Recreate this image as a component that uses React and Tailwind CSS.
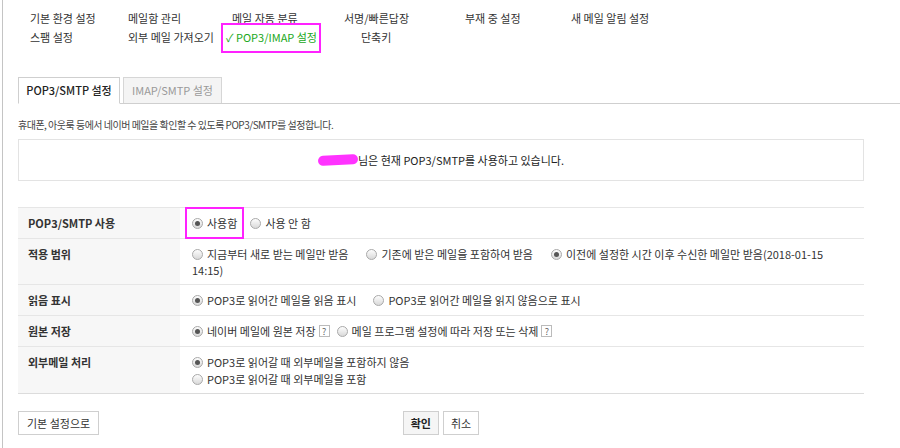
import React from "react";

const font = { fontFamily: '"Noto Sans CJK KR", "Noto Sans", sans-serif' };

const Radio = ({ checked }) => (
  <span className="flex items-center justify-center w-[11px] h-[11px] rounded-full border border-[#a9a9a9] bg-gradient-to-b from-[#fdfdfd] to-[#d9d9d9] mr-[4px] shrink-0">
    {checked && <span className="w-[5px] h-[5px] rounded-full bg-[#555]" />}
  </span>
);

const Help = () => (
  <span className="flex items-center justify-center w-[11px] h-[12px] border border-[#bbb] text-[9px] leading-none text-[#666] ml-[3px]">
    ?
  </span>
);

const Opt = ({ checked, children, className = "" }) => (
  <span className={`flex items-center h-[16px] whitespace-nowrap ${className}`}>
    <Radio checked={checked} />
    {children}
  </span>
);

const Row = ({ label, children, h, last }) => (
  <div className={`grid grid-cols-[162px_1fr] border-t border-[#e6e6e6] ${h} ${last ? "border-b border-b-[#dcdcdc]" : ""}`}>
    <div className="bg-[#f7f7f7] pl-[10px] pt-[7px] font-bold text-[#333] leading-[16px]">{label}</div>
    <div className="relative pl-[12px] pt-[7px] leading-[16px] flex flex-col">{children}</div>
  </div>
);

export default function App() {
  const menu1 = [
    ["기본 환경 설정", "w-[98px]"],
    ["메일함 관리", "w-[104px]"],
    ["메일 자동 분류", "w-[112px]"],
    ["서명/빠른답장", "w-[121px]"],
    ["부재 중 설정", "w-[106px]"],
    ["새 메일 알림 설정", "w-[120px]"],
  ];

  return (
    <div style={font} className="w-[900px] h-[448px] bg-white text-[11px] text-[#333] overflow-hidden">
      <div className="ml-[2px] h-full border-l border-[#c4c4c4] pl-[15px]">
        {/* top menu */}
        <div className="pt-[9px] pl-[12px] leading-[19px]">
          <div className="flex">
            {menu1.map(([t, w]) => (
              <span key={t} className={`${w} whitespace-nowrap`}>{t}</span>
            ))}
          </div>
          <div className="flex">
            <span className="w-[98px]">스팸 설정</span>
            <span className="w-[98px] whitespace-nowrap">외부 메일 가져오기</span>
            <span className="relative w-[135px] whitespace-nowrap text-[#21a821]">
              ✓ POP3/IMAP 설정
              <span className="absolute left-[-5px] top-[-5px] w-[100px] h-[30px] border-2 border-[#ff22ff]" />
            </span>
            <span>단축키</span>
          </div>
        </div>

        {/* tabs */}
        <div className="mt-[30px] flex gap-[3px] border-b border-[#cfcfcf] -mr-[1px] h-[27px] items-end">
          <div className="w-[102px] h-[27px] border border-[#cfcfcf] border-b-white bg-white -mb-[1px] flex items-center justify-center text-[#222] font-medium">
            POP3/SMTP 설정
          </div>
          <div className="w-[99px] h-[26px] border border-[#d6d6d6] border-b-0 bg-[#f4f4f4] flex items-center justify-center text-[#999]">
            IMAP/SMTP 설정
          </div>
        </div>

        <div className="w-[846px]">
          <p className="mt-[13px] leading-[16px] text-[10px] tracking-[-0.5px] text-[#444]">
            휴대폰, 아웃룩 등에서 네이버 메일을 확인할 수 있도록 POP3/SMTP를 설정합니다.
          </p>

          <div className="mt-[6px] h-[42px] border border-[#e3e3e3] flex items-center justify-center text-[#222]">
            <span className="inline-block w-[40px] h-[10px] rounded-full bg-[#ff33ff] -rotate-3" />
            님은 현재 POP3/SMTP를 사용하고 있습니다.
          </div>

          {/* settings table */}
          <div className="mt-[26px]">
            <Row label="POP3/SMTP 사용" h="h-[31px]">
              <span className="absolute left-[5px] top-[-1px] w-[59px] h-[32px] border-2 border-[#ff22ff]" />
              <div className="flex">
                <Opt checked className="mr-[13px]">사용함</Opt>
                <Opt>사용 안 함</Opt>
              </div>
            </Row>
            <Row label="적용 범위" h="h-[46px]">
              <div className="flex whitespace-nowrap">
                <Opt className="mr-[18px]">지금부터 새로 받는 메일만 받음</Opt>
                <Opt className="mr-[18px]">기존에 받은 메일을 포함하여 받음</Opt>
                <Opt checked>이전에 설정한 시간 이후 수신한 메일만 받음(2018-01-15</Opt>
              </div>
              <div className="h-[16px]">14:15)</div>
            </Row>
            <Row label="읽음 표시" h="h-[31px]">
              <div className="flex">
                <Opt checked className="mr-[17px]">POP3로 읽어간 메일을 읽음 표시</Opt>
                <Opt>POP3로 읽어간 메일을 읽지 않음으로 표시</Opt>
              </div>
            </Row>
            <Row label="원본 저장" h="h-[31px]">
              <div className="flex">
                <Opt checked className="mr-[7px]">네이버 메일에 원본 저장<Help /></Opt>
                <Opt>메일 프로그램 설정에 따라 저장 또는 삭제<Help /></Opt>
              </div>
            </Row>
            <Row label="외부메일 처리" h="h-[48px]" last>
              <Opt checked>POP3로 읽어갈 때 외부메일을 포함하지 않음</Opt>
              <Opt className="mt-[1px]">POP3로 읽어갈 때 외부메일을 포함</Opt>
            </Row>
          </div>

          {/* buttons */}
          <div className="mt-[17px] grid grid-cols-[1fr_auto_1fr] items-center">
            <button className="justify-self-start h-[24px] px-[8px] border border-[#cfcfcf] bg-white text-[#333]">
              기본 설정으로
            </button>
            <div className="flex gap-[4px]">
              <button className="h-[24px] px-[7px] border border-[#cfcfcf] bg-[#f5f5f5] font-bold text-[#222]">확인</button>
              <button className="h-[24px] px-[7px] border border-[#cfcfcf] bg-white text-[#333]">취소</button>
            </div>
            <div />
          </div>
        </div>
      </div>
    </div>
  );
}
